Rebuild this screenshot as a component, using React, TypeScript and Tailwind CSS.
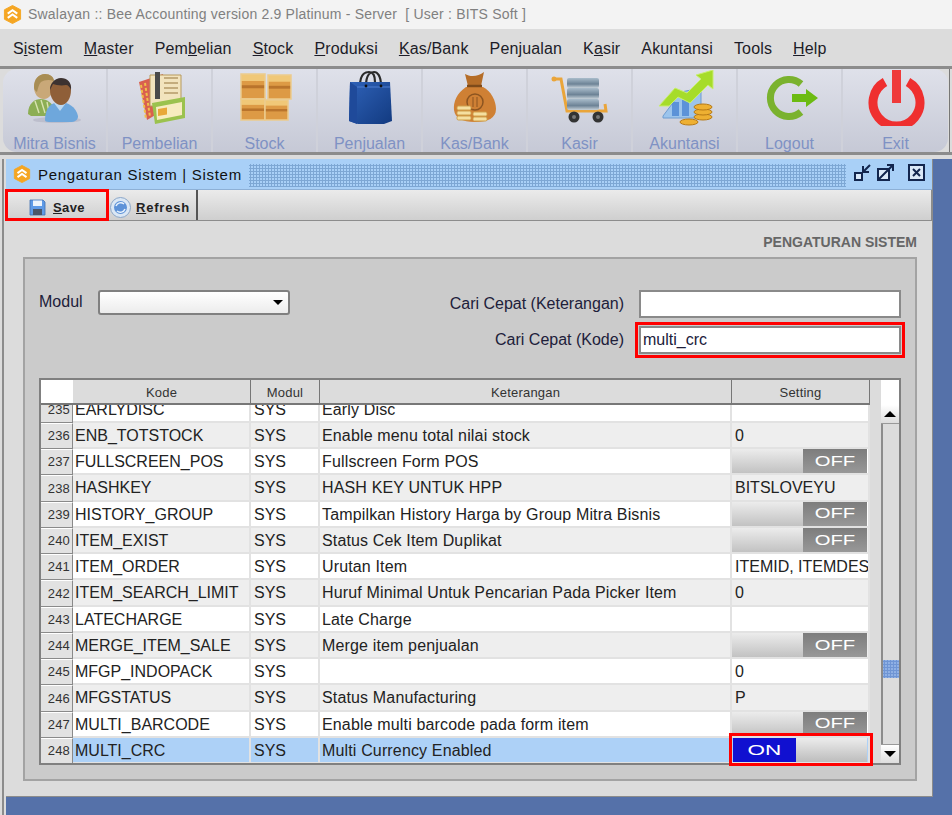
import { Fragment } from "react";

type Row = { no: number; kode: string; ket: string; setting?: string; toggle?: "ON" | "OFF"; selected?: boolean };

const rows: Row[] = [
  { no: 235, kode: "EARLYDISC", ket: "Early Disc" },
  { no: 236, kode: "ENB_TOTSTOCK", ket: "Enable menu total nilai stock", setting: "0" },
  { no: 237, kode: "FULLSCREEN_POS", ket: "Fullscreen Form POS", toggle: "OFF" },
  { no: 238, kode: "HASHKEY", ket: "HASH KEY UNTUK HPP", setting: "BITSLOVEYU" },
  { no: 239, kode: "HISTORY_GROUP", ket: "Tampilkan History Harga by Group Mitra Bisnis", toggle: "OFF" },
  { no: 240, kode: "ITEM_EXIST", ket: "Status Cek Item Duplikat", toggle: "OFF" },
  { no: 241, kode: "ITEM_ORDER", ket: "Urutan Item", setting: "ITEMID, ITEMDES" },
  { no: 242, kode: "ITEM_SEARCH_LIMIT", ket: "Huruf Minimal Untuk Pencarian Pada Picker Item", setting: "0" },
  { no: 243, kode: "LATECHARGE", ket: "Late Charge" },
  { no: 244, kode: "MERGE_ITEM_SALE", ket: "Merge item penjualan", toggle: "OFF" },
  { no: 245, kode: "MFGP_INDOPACK", ket: "", setting: "0" },
  { no: 246, kode: "MFGSTATUS", ket: "Status Manufacturing", setting: "P" },
  { no: 247, kode: "MULTI_BARCODE", ket: "Enable multi barcode pada form item", toggle: "OFF" },
  { no: 248, kode: "MULTI_CRC", ket: "Multi Currency Enabled", toggle: "ON", selected: true },
];

const menus: [string, string, string][] = [
  ["S", "i", "stem"],
  ["", "M", "aster"],
  ["Pem", "b", "elian"],
  ["", "S", "tock"],
  ["", "P", "roduksi"],
  ["", "K", "as/Bank"],
  ["Penjualan", "", ""],
  ["K", "a", "sir"],
  ["Akuntansi", "", ""],
  ["Tools", "", ""],
  ["", "H", "elp"],
];

function BeeLogo({ size }: { size: number }) {
  return (
    <svg width={size} height={size} viewBox="0 0 20 20">
      <path d="M10 0.5 18.5 5v10L10 19.5 1.5 15V5z" fill="#f5a623" stroke="#f5a623" strokeLinejoin="round" />
      <path d="M5 9 10 5.5 15 9M5 13.5 10 10 15 13.5" fill="none" stroke="#fff" strokeWidth="2.2" />
    </svg>
  );
}

function PeopleIcon() {
  return (
    <svg width="60" height="56" viewBox="0 0 60 56">
      <ellipse cx="32" cy="50" rx="24" ry="3" fill="#aab" opacity="0.5" />
      <path d="M3 44c0-11 7-15 13-15s11 4 13 9v8H6z" fill="#8cae54" />
      <path d="M10 31l4 12M16 30l4 13M22 32l2 10" stroke="#d8e4b0" strokeWidth="1.4" />
      <path d="M9 17c0-8 5-13 11-13 5 0 9 3 9 9 0 9-4 16-10 16S9 24 9 17z" fill="#c9a878" />
      <path d="M9 17c0-8 5-13 11-13 5 0 9 3 9 7-5-2-10-1-13 1-2 2-3 6-4 10-2-1-3-3-3-5z" fill="#a88d54" />
      <path d="M20 50c0-13 7-18 15-18s16 5 18 14c0 4-3 6-8 6H24c-3 0-4-1-4-2z" fill="#6ea7dc" />
      <path d="M29 33l6 8 6-8z" fill="#bcd8f0" />
      <path d="M25 20c0-7 5-11 11-11s10 4 10 11c0 8-4 15-10 15s-11-7-11-15z" fill="#8f5f38" />
      <path d="M25 20c0-7 5-12 11-12s11 4 10 12c-1-3-3-5-5-5-5 1-10 0-13-1-1 2-2 4-3 6z" fill="#3c3230" />
    </svg>
  );
}

function BooksIcon() {
  return (
    <svg width="60" height="56" viewBox="0 0 60 56">
      <path d="M9 12 33 4 37 38 17 50z" fill="#d9604f" />
      <path d="M11 15l5 34M15 13l5 34" stroke="#f0c04a" strokeWidth="2" strokeDasharray="3 2" />
      <path d="M20 5h31v31H20z" fill="#f2e3bd" stroke="#b79a5c" />
      <path d="M25 2h5v27h-5z" fill="#4a4a4a" />
      <path d="M34 8h14M34 13h14M34 18h14M34 23h14" stroke="#b59a68" strokeWidth="1.5" />
      <path d="M22 33l33-6v21l-30 6z" fill="#9bc24e" />
      <path d="M26 37l26-5v13l-25 5z" fill="#f7ecc0" />
      <path d="M28 39l9-1.5v7l-9 1.5z" fill="#e8a83a" />
    </svg>
  );
}

function Box({ x, y, w, h }: { x: number; y: number; w: number; h: number }) {
  return (
    <g>
      <rect x={x} y={y} width={w} height={h} fill="#dd9a45" />
      <rect x={x} y={y} width={w} height={h * 0.28} fill="#f0c878" />
      <rect x={x} y={y + h * 0.45} width={w} height={h * 0.12} fill="#b9742c" />
      <rect x={x} y={y} width={w} height={h} fill="none" stroke="#eccb8d" strokeWidth="1.5" />
    </g>
  );
}

function BoxesIcon() {
  return (
    <svg width="60" height="56" viewBox="0 0 60 56">
      <Box x={6} y={4} w={24} h={25} />
      <Box x={33} y={5} w={23} h={24} />
      <Box x={6} y={29} w={24} h={21} />
      <Box x={30} y={30} w={23} h={20} />
    </svg>
  );
}

function BagIcon() {
  return (
    <svg width="60" height="56" viewBox="0 0 60 56">
      <defs>
        <linearGradient id="bag" x1="0" y1="0" x2="1" y2="1">
          <stop offset="0" stopColor="#2f62b8" />
          <stop offset="1" stopColor="#123a80" />
        </linearGradient>
      </defs>
      <path d="M20 16c0-14 7-14 9-14 3 0 6 2 6 10M26 16c0-12 5-14 8-14s7 3 7 14" fill="none" stroke="#2a2a2a" strokeWidth="2.2" />
      <path d="M10 12h40l2 39-8 3H18l-9-3z" fill="url(#bag)" />
      <path d="M10 12l7 5v37l-8-3z" fill="#1f4a9a" />
      <path d="M17 17h33" stroke="#4f7fd0" />
      <circle cx="26" cy="16" r="1.4" fill="#111" />
      <circle cx="41" cy="16" r="1.4" fill="#111" />
    </svg>
  );
}

function MoneyIcon() {
  return (
    <svg width="60" height="56" viewBox="0 0 60 56">
      <path d="M21 17c-9 6-13 15-12 23 1 8 8 12 21 12s21-4 21-13c0-8-5-18-13-22z" fill="#cf8034" />
      <path d="M20 4c5 3 13 3 19-2l-3 14H23z" fill="#b56d28" />
      <path d="M22 16h15" stroke="#7d4a1a" strokeWidth="2.5" />
      <circle cx="30" cy="32" r="8" fill="none" stroke="#8c5420" strokeWidth="1.5" />
      <path d="M28 27v10M32 27v10" stroke="#8c5420" />
      <g fill="#f5dfa0" stroke="#cf9f4a">
        <rect x="12" y="46" width="14" height="4" rx="1.5" />
        <rect x="12" y="41" width="14" height="4" rx="1.5" />
        <rect x="12" y="36" width="14" height="4" rx="1.5" />
        <rect x="28" y="47" width="14" height="4" rx="1.5" />
        <rect x="28" y="42" width="14" height="4" rx="1.5" />
      </g>
    </svg>
  );
}

function CartIcon() {
  return (
    <svg width="60" height="56" viewBox="0 0 60 56">
      <defs>
        <linearGradient id="disk" x1="0" y1="0" x2="0" y2="1">
          <stop offset="0" stopColor="#a9bccb" />
          <stop offset="0.6" stopColor="#6d8396" />
          <stop offset="1" stopColor="#c5d0d8" />
        </linearGradient>
      </defs>
      <path d="M4 9h7l6 32h39l-1-7" fill="none" stroke="#eaa53a" strokeWidth="3" />
      <circle cx="4" cy="9" r="2.5" fill="#eaa53a" />
      <rect x="17" y="8" width="32" height="10" rx="2" fill="url(#disk)" />
      <rect x="17" y="18" width="32" height="11" rx="2" fill="url(#disk)" />
      <rect x="17" y="29" width="32" height="11" rx="2" fill="url(#disk)" />
      <circle cx="24" cy="47" r="5.5" fill="#333" />
      <circle cx="48" cy="47" r="5.5" fill="#333" />
      <circle cx="24" cy="47" r="2" fill="#777" />
      <circle cx="48" cy="47" r="2" fill="#777" />
    </svg>
  );
}

function ChartIcon() {
  return (
    <svg width="60" height="56" viewBox="0 0 60 56">
      <path d="M8 46 26 22 46 18v30H8z" fill="#9cc4ec" stroke="#6f9cd0" />
      <rect x="17" y="32" width="7" height="14" fill="#5c92d8" />
      <rect x="27" y="30" width="7" height="16" fill="#5c92d8" />
      <path d="M4 36 20 18l12 5L46 9l-5-4 17-5v19l-5-4-18 18-12-6-9 9z" fill="#a6dc2a" stroke="#c9ee70" />
      <g fill="#eeb032" stroke="#b87a14">
        <ellipse cx="48" cy="47" rx="9" ry="3" />
        <ellipse cx="48" cy="42" rx="9" ry="3" />
        <ellipse cx="48" cy="37" rx="9" ry="3" />
        <ellipse cx="34" cy="52" rx="9" ry="3" />
      </g>
    </svg>
  );
}

function LogoutIcon() {
  return (
    <svg width="60" height="56" viewBox="0 0 60 56">
      <path d="M41 14A18.5 18.5 0 1 0 41 42" fill="none" stroke="#7ab22e" strokeWidth="7" />
      <path d="M32 24h14v-5l12 9-12 9v-5H32z" fill="#6cbb12" />
    </svg>
  );
}

function ExitIcon() {
  return (
    <svg width="60" height="56" viewBox="0 0 60 56">
      <path d="M19 12A23.5 23.5 0 1 0 42 12" fill="none" stroke="#ef2f2f" strokeWidth="9" />
      <rect x="26" y="0" width="9" height="33" fill="#ef3a3a" />
    </svg>
  );
}

const tools = [
  { label: "Mitra Bisnis", icon: <PeopleIcon /> },
  { label: "Pembelian", icon: <BooksIcon /> },
  { label: "Stock", icon: <BoxesIcon /> },
  { label: "Penjualan", icon: <BagIcon /> },
  { label: "Kas/Bank", icon: <MoneyIcon /> },
  { label: "Kasir", icon: <CartIcon /> },
  { label: "Akuntansi", icon: <ChartIcon /> },
  { label: "Logout", icon: <LogoutIcon /> },
  { label: "Exit", icon: <ExitIcon /> },
];

function Toggle({ value }: { value: "ON" | "OFF" }) {
  if (value === "ON") {
    return (
      <div className="ml-[1px] flex h-[24px] w-[134px]">
        <div className="flex w-[63px] items-center justify-center bg-[#1010d0] text-[15px] text-white">
          <span className="inline-block scale-x-[1.5]">ON</span>
        </div>
        <div className="flex-1 bg-gradient-to-b from-[#ececec] to-[#bdbdbd]" />
      </div>
    );
  }
  return (
    <div className="flex h-[24px] w-[135px]">
      <div className="w-[71px] bg-gradient-to-b from-[#ececec] to-[#c2c2c2]" />
      <div className="flex flex-1 items-center justify-center bg-gradient-to-b from-[#7d7d7d] to-[#989898] text-[15px] text-white">
        <span className="inline-block scale-x-[1.35]">OFF</span>
      </div>
    </div>
  );
}

function RowCells({ row, striped }: { row: Row; striped: boolean }) {
  const bg = row.selected ? "bg-[#add1f7]" : striped ? "bg-[#eeeeee]" : "bg-white";
  const cell = `h-full border-b-[2px] border-r-[2px] border-[#e2e2e2] overflow-hidden whitespace-nowrap flex items-center ${bg}`;
  return (
    <Fragment>
      <div className="flex h-full items-center justify-end border-b border-r border-t border-b-[#8a8a8a] border-r-[#8a8a8a] border-t-white bg-[#e2e2e2] pr-[2px] text-[13px] tracking-[0.2px] text-[#333]">
        {row.no}
      </div>
      <div className={`${cell} pl-[2px] pt-[2px]`}>{row.kode}</div>
      <div className={`${cell} pl-[3px] pt-[2px]`}>SYS</div>
      <div className={`${cell} pl-[2px] pt-[2px] tracking-[0.15px]`}>{row.ket}</div>
      <div className={cell}>
        {row.toggle ? <Toggle value={row.toggle} /> : <span className="pl-[3px] pt-[2px]">{row.setting}</span>}
      </div>
    </Fragment>
  );
}

export default function App() {
  return (
    <div className="flex h-[815px] w-[952px] flex-col overflow-hidden bg-[#5571a9] font-['Liberation_Sans',Arial,sans-serif] text-[#222]">
      <div className="flex h-[29px] items-center gap-[6px] bg-[#f3f3f3] pl-[3px] text-[14px] tracking-[0.2px] text-[#808080]">
        <BeeLogo size={19} />
        <span className="whitespace-pre">Swalayan :: Bee Accounting version 2.9 Platinum - Server  [ User : BITS Soft ]</span>
      </div>

      <div className="flex h-[37px] items-center gap-[21px] bg-[#dcdcdc] pl-[13px] pt-[2px] text-[16px] tracking-[0.15px] text-[#1c1c28]">
        {menus.map(([a, u, b]) => (
          <span key={a + u + b}>
            {a}
            {u && <span className="underline">{u}</span>}
            {b}
          </span>
        ))}
      </div>

      <div className="flex h-[89px] border-b-[3px] border-t-[3px] border-b-[#8c8c8c] border-t-[#8c8c8c] bg-[#dcdcdc] pl-[3px] pr-[2px]">
        <div className="flex flex-1 rounded-[14px] bg-gradient-to-b from-[#dfe1ea] to-[#c6c9d6]">
          {tools.map((t, i) => (
            <div key={t.label} className={`flex w-[105px] flex-col items-center ${i < 8 ? "border-r-2 border-r-[#cfd1da]" : ""}`}>
              <div className="mt-[1px] h-[56px]">{t.icon}</div>
              <div className="mt-[9px] text-[16px] leading-[18px] text-[#7f92c4]">{t.label}</div>
            </div>
          ))}
        </div>
        <div className="ml-[1px] w-[2px] bg-[#777]" />
      </div>

      <div className="h-[4px] bg-[#dcdcdc]" />

      <div className="flex flex-1 items-stretch">
        <div className="flex w-[6px]">
          <div className="w-[2px] bg-[#dcdcdc]" />
          <div className="w-[2px] bg-[#8c8c8c]" />
          <div className="w-[2px] bg-[#dcdcdc]" />
        </div>

        <div className="flex h-[638px] w-[927px] flex-col border-b border-r border-[#8c8c8c] bg-[#dcdcdc]">
          <div className="flex h-[31px] items-center border-b border-b-[#8db0d6] bg-[#a9d0f7] pl-[7px]">
            <BeeLogo size={18} />
            <span className="ml-[7px] whitespace-nowrap pt-[3px] text-[15px] tracking-[0.7px] text-[#111]">Pengaturan Sistem | Sistem</span>
            <div className="ml-[7px] mt-[3px] h-[23px] w-[597px] bg-[radial-gradient(#7da7d4_1px,transparent_1.2px)] bg-[length:3px_3px]" />
            <div className="ml-[7px] flex items-center gap-[4px] pb-[3px]">
              <svg width="19" height="19" viewBox="0 0 19 19" fill="none" stroke="#13264e" strokeWidth="2">
                <rect x="2" y="10" width="7" height="7" fill="#dbe9f8" />
                <path d="M17 2 10 9M10 3v6h6" />
              </svg>
              <svg width="19" height="19" viewBox="0 0 19 19" fill="none" stroke="#13264e" strokeWidth="2">
                <rect x="2" y="6" width="11" height="11" fill="#dbe9f8" />
                <path d="M3 16 17 2M11 2h6v6" />
              </svg>
              <svg className="ml-[8px]" width="19" height="19" viewBox="0 0 19 19" fill="none" stroke="#13264e" strokeWidth="2">
                <rect x="2" y="2" width="15" height="15" fill="#dbe9f8" />
                <path d="M6 6l7 7M13 6l-7 7" />
              </svg>
            </div>
          </div>

          <div className="flex h-[31px] items-stretch border-b border-r border-[#8c8c8c] bg-gradient-to-b from-[#ebebeb] to-[#cfcfcf] text-[13px] font-bold tracking-[0.4px] text-[#222]">
            <div className="flex w-[102px] items-center justify-center gap-[7px] pt-[5px] outline-[3px] outline-offset-[-2px] outline-[#f00]">
              <svg width="17" height="17" viewBox="0 0 17 17">
                <path d="M1 1h13l2 2v13H1z" fill="#5f9ae6" stroke="#3f6fb0" strokeWidth="0.8" />
                <rect x="4" y="1.5" width="9" height="5.5" fill="#eef4fb" />
                <rect x="4" y="10" width="9" height="6" fill="#4a5668" />
              </svg>
              <span><span className="underline">S</span>ave</span>
            </div>
            <div className="flex w-[90px] items-center gap-[5px] border-r-2 border-r-[#555] pl-[2px] pt-[5px] tracking-[0.8px]">
              <svg width="21" height="21" viewBox="0 0 21 21">
                <circle cx="10.5" cy="10.5" r="10" fill="#dbe7f4" stroke="#8aa6c8" />
                <circle cx="10.5" cy="10.5" r="6.5" fill="#5d92d8" />
                <path d="M6 9a5 5 0 0 1 8-2M15 12a5 5 0 0 1-8 2" fill="none" stroke="#e8f2fc" strokeWidth="1.5" />
              </svg>
              <span><span className="underline">R</span>efresh</span>
            </div>
          </div>

          <div className="flex justify-end pb-[8px] pr-[15px] pt-[14px] text-[14px] font-bold leading-[14px] text-[#666]">PENGATURAN SISTEM</div>

          <div className="ml-[17px] mr-[15px] flex flex-col border-2 border-[#a3a3a3] bg-[#cbcbcb] px-[14px] pt-[31px]">
            <div className="flex justify-between text-[16px] text-[#20203a]">
              <div className="flex h-[24px] items-center">
                <span className="w-[59px]">Modul</span>
                <div className="flex h-[25px] w-[192px] items-center justify-end rounded-[3px] border-2 border-[#808080] bg-gradient-to-b from-white to-[#ececec] pr-[5px]">
                  <div className="h-0 w-0 border-x-[5px] border-t-[5px] border-x-transparent border-t-black" />
                </div>
              </div>
              <div className="flex flex-col items-end gap-[8px]">
                <div className="flex items-center">
                  <span className="mr-[15px]">Cari Cepat (Keterangan)</span>
                  <div className="h-[28px] w-[262px] border-2 border-[#8a8a8a] bg-white" />
                </div>
                <div className="flex items-center">
                  <span className="mr-[15px]">Cari Cepat (Kode)</span>
                  <div className="flex h-[28px] w-[262px] items-center border-2 border-[#8a8a8a] bg-white pl-[2px] outline-[3px] outline-offset-[1px] outline-[#f00]">multi_crc</div>
                </div>
              </div>
            </div>

            <div className="relative mt-[24px] flex h-[387px] border-2 border-[#808080] bg-[#dcdcdc]">
              <div className="w-[829px] overflow-hidden">
                <div className="grid h-[25px] grid-cols-[32px_178px_69px_412px_138px] border-b-2 border-b-[#777] text-[13px] tracking-[0.2px] text-[#333]">
                  <div className="bg-white" />
                  <div className="flex items-center justify-center border-r border-r-[#777] bg-[#dcdcdc] pt-[3px]">Kode</div>
                  <div className="flex items-center justify-center border-r border-r-[#777] bg-[#dcdcdc] pt-[3px]">Modul</div>
                  <div className="flex items-center justify-center border-r border-r-[#777] bg-[#dcdcdc] pt-[3px]">Keterangan</div>
                  <div className="flex items-center justify-center border-r border-r-[#777] bg-[#dcdcdc] pt-[3px]">Setting</div>
                </div>
                <div className="h-[358px] overflow-hidden">
                  <div className="mt-[-8.5px] grid auto-rows-[26.25px] grid-cols-[32px_178px_69px_412px_138px] text-[16px] text-[#222]">
                    {rows.map((r, i) => (
                      <RowCells key={r.no} row={r} striped={i % 2 === 1} />
                    ))}
                  </div>
                </div>
              </div>
              <div className="w-[11px]" />
              <div className="flex flex-1 flex-col">
                <div className="h-[25px] bg-white" />
                <div className="flex h-[19px] items-center justify-center border-b border-b-[#999] bg-gradient-to-b from-white to-[#ddd]">
                  <div className="h-0 w-0 border-x-[6px] border-b-[6px] border-x-transparent border-b-black" />
                </div>
                <div className="flex flex-1 flex-col border-l-2 border-l-[#8c8c8c]">
                  <div className="h-[236px]" />
                  <div className="h-[18px] bg-[radial-gradient(#6f95d4_1px,#8fb0e4_1.2px)] bg-[length:3px_3px]" />
                  <div className="flex-1" />
                </div>
                <div className="flex h-[19px] items-center justify-center border-t border-t-[#999] bg-gradient-to-b from-white to-[#ddd]">
                  <div className="h-0 w-0 border-x-[6px] border-t-[6px] border-x-transparent border-t-black" />
                </div>
              </div>
              <div className="absolute left-[688px] top-[353px] h-[33px] w-[144px] border-[3px] border-[#f00]" />
            </div>
            <div className="h-[14px]" />
          </div>
        </div>
      </div>
    </div>
  );
}
